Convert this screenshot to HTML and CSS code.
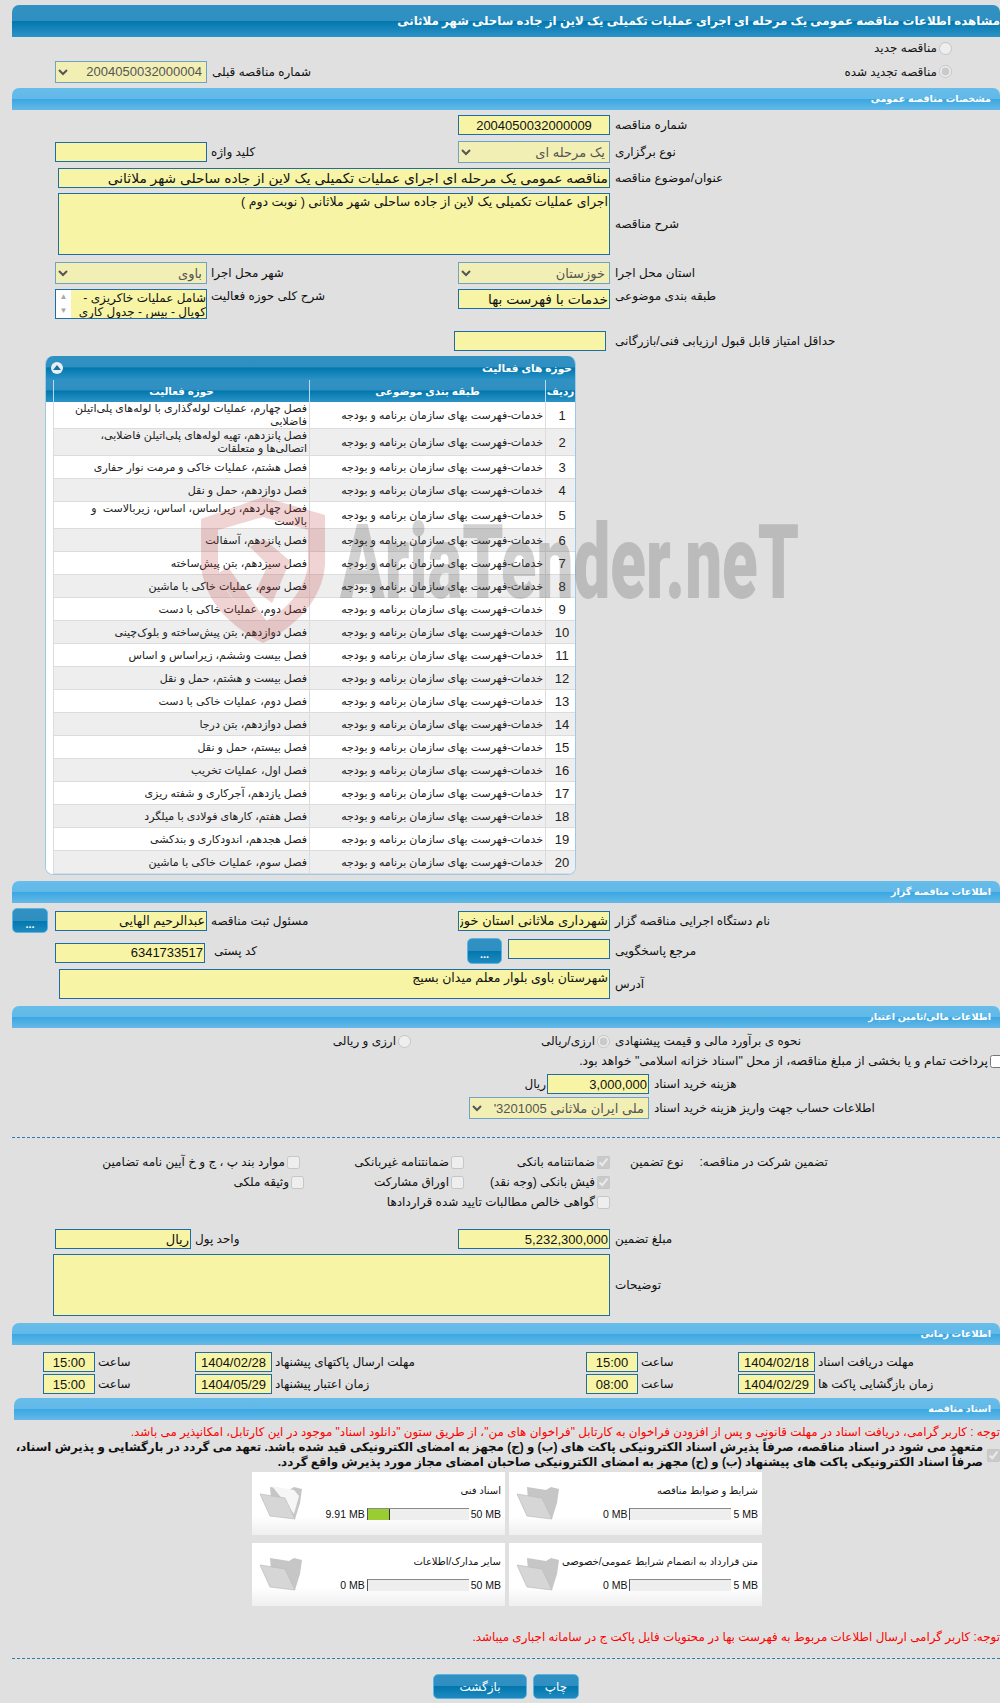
FILE: index.html
```html
<!DOCTYPE html>
<html lang="fa" dir="rtl">
<head>
  <meta charset="UTF-8">
  <meta name="viewport" content="width=device-width, initial-scale=1.0">
  <title>مشاهده اطلاعات مناقصه</title>
  <link rel="stylesheet" href="styles.css">
</head>
<body>

<div class="page">

  <div class="title-bar">مشاهده اطلاعات مناقصه عمومی یک مرحله ای اجرای عملیات تکمیلی یک لاین از جاده ساحلی شهر ملاثانی</div>

  <div class="radio-row first"><label class="opt"><input type="radio" disabled><span>مناقصه جدید</span></label></div>
  <div class="radio-row second">
    <label class="opt"><input type="radio" checked disabled><span>مناقصه تجدید شده</span></label>
    <div class="prev-no">
      <span class="lbl">شماره مناقصه قبلی</span>
      <select class="sel" disabled><option>2004050032000004</option></select>
    </div>
  </div>

  <div class="sec-bar">مشخصات مناقصه عمومی</div>

  <div class="row mt5">
    <span class="lbl">شماره مناقصه</span>
    <input class="fld center" readonly value="2004050032000009">
  </div>
  <div class="row mt6">
    <span class="lbl">نوع برگزاری</span>
    <select class="sel" disabled><option>یک مرحله ای</option></select>
    <span class="lbl lbl-l">کلید واژه</span>
    <input class="fld" readonly>
  </div>
  <div class="row mt5">
    <span class="lbl">عنوان/موضوع مناقصه</span>
    <input class="fld w552 fs14" readonly value="مناقصه عمومی یک مرحله ای اجرای عملیات تکمیلی یک لاین از جاده ساحلی شهر ملاثانی">
  </div>
  <div class="row mt5">
    <span class="lbl">شرح مناقصه</span>
    <textarea class="fld area w552 h62 fs12" readonly>اجرای عملیات تکمیلی یک لاین از جاده ساحلی شهر ملاثانی ( نوبت دوم )</textarea>
  </div>
  <div class="row mt7">
    <span class="lbl">استان محل اجرا</span>
    <select class="sel" disabled><option>خوزستان</option></select>
    <span class="lbl lbl-l">شهر محل اجرا</span>
    <select class="sel" disabled><option>باوی</option></select>
  </div>
  <div class="row mt5 top">
    <span class="lbl">طبقه بندی موضوعی</span>
    <input class="fld fs14" readonly value="خدمات با فهرست بها">
    <span class="lbl lbl-l">شرح کلی حوزه فعالیت</span>
    <div class="listbox">
      <div class="list-text">شامل عملیات خاکریزی - کوپال - بیس - جدول کاری</div>
      <div class="list-scroll"><span>▲</span><span>▼</span></div>
    </div>
  </div>
  <div class="row mt12 score-row">
    <span class="lbl">حداقل امتیاز قابل قبول ارزیابی فنی/بازرگانی</span>
    <input class="fld" readonly>
  </div>

  <div class="panel">
    <div class="panel-head">
      <span>حوزه های فعالیت</span>
      <span class="collapse"><svg width="8" height="6" viewBox="0 0 8 6"><path d="M0 5 4 0l4 5z" fill="#1d6f9e"/></svg></span>
    </div>
    <table class="grid">
      <thead>
        <tr><th class="c-no">ردیف</th><th class="c-cat">طبقه بندی موضوعی</th><th class="c-act">حوزه فعالیت</th><th class="c-pad"></th></tr>
      </thead>
      <tbody>
        <tr><td class="num">1</td><td>خدمات-فهرست بهای سازمان برنامه و بودجه</td><td>فصل چهارم، عملیات لوله‌گذاری با لوله‌های پلی‌اتیلن فاضلابی</td><td></td></tr>
        <tr><td class="num">2</td><td>خدمات-فهرست بهای سازمان برنامه و بودجه</td><td>فصل پانزدهم، تهیه لوله‌های پلی‌اتیلن فاضلابی، اتصالی‌ها و متعلقات</td><td></td></tr>
        <tr><td class="num">3</td><td>خدمات-فهرست بهای سازمان برنامه و بودجه</td><td>فصل هشتم، عملیات خاکی و مرمت نوار حفاری</td><td></td></tr>
        <tr><td class="num">4</td><td>خدمات-فهرست بهای سازمان برنامه و بودجه</td><td>فصل دوازدهم، حمل و نقل</td><td></td></tr>
        <tr><td class="num">5</td><td>خدمات-فهرست بهای سازمان برنامه و بودجه</td><td>فصل چهاردهم، زیراساس، اساس، زیربالاست &nbsp;و بالاست</td><td></td></tr>
        <tr><td class="num">6</td><td>خدمات-فهرست بهای سازمان برنامه و بودجه</td><td>فصل پانزدهم، آسفالت</td><td></td></tr>
        <tr><td class="num">7</td><td>خدمات-فهرست بهای سازمان برنامه و بودجه</td><td>فصل سیزدهم، بتن پیش‌ساخته</td><td></td></tr>
        <tr><td class="num">8</td><td>خدمات-فهرست بهای سازمان برنامه و بودجه</td><td>فصل سوم، عملیات خاکی با ماشین</td><td></td></tr>
        <tr><td class="num">9</td><td>خدمات-فهرست بهای سازمان برنامه و بودجه</td><td>فصل دوم، عملیات خاکی با دست</td><td></td></tr>
        <tr><td class="num">10</td><td>خدمات-فهرست بهای سازمان برنامه و بودجه</td><td>فصل دوازدهم، بتن پیش‌ساخته و بلوک‌چینی</td><td></td></tr>
        <tr><td class="num">11</td><td>خدمات-فهرست بهای سازمان برنامه و بودجه</td><td>فصل بیست وششم، زیراساس و اساس</td><td></td></tr>
        <tr><td class="num">12</td><td>خدمات-فهرست بهای سازمان برنامه و بودجه</td><td>فصل بیست و هشتم، حمل و نقل</td><td></td></tr>
        <tr><td class="num">13</td><td>خدمات-فهرست بهای سازمان برنامه و بودجه</td><td>فصل دوم، عملیات خاکی با دست</td><td></td></tr>
        <tr><td class="num">14</td><td>خدمات-فهرست بهای سازمان برنامه و بودجه</td><td>فصل دوازدهم، بتن درجا</td><td></td></tr>
        <tr><td class="num">15</td><td>خدمات-فهرست بهای سازمان برنامه و بودجه</td><td>فصل بیستم، حمل و نقل</td><td></td></tr>
        <tr><td class="num">16</td><td>خدمات-فهرست بهای سازمان برنامه و بودجه</td><td>فصل اول، عملیات تخریب</td><td></td></tr>
        <tr><td class="num">17</td><td>خدمات-فهرست بهای سازمان برنامه و بودجه</td><td>فصل یازدهم، آجرکاری و شفته ریزی</td><td></td></tr>
        <tr><td class="num">18</td><td>خدمات-فهرست بهای سازمان برنامه و بودجه</td><td>فصل هفتم، کارهای فولادی با میلگرد</td><td></td></tr>
        <tr><td class="num">19</td><td>خدمات-فهرست بهای سازمان برنامه و بودجه</td><td>فصل هجدهم، اندودکاری و بندکشی</td><td></td></tr>
        <tr><td class="num">20</td><td>خدمات-فهرست بهای سازمان برنامه و بودجه</td><td>فصل سوم، عملیات خاکی با ماشین</td><td></td></tr>
      </tbody>
    </table>
  </div>

  <div class="sec-bar mt6">اطلاعات مناقصه گزار</div>

  <div class="row owner-row mt5">
    <span class="lbl">نام دستگاه اجرایی مناقصه گزار</span>
    <input class="fld" readonly value="شهرداری ملاثانی استان خوزستان">
    <span class="lbl lbl-l">مسئول ثبت مناقصه</span>
    <input class="fld fs12" readonly value="عبدالرحیم الهایی">
    <span></span>
    <button class="btn dots">...</button>
  </div>
  <div class="row ref-row mt5">
    <span class="lbl">مرجع پاسخگویی</span>
    <div class="ref-ctrl">
      <input class="fld w102" readonly>
      <button class="btn dots">...</button>
    </div>
    <span class="lbl lbl-post">کد پستی</span>
    <input class="fld num-fld w150" readonly value="6341733517">
  </div>
  <div class="row mt5">
    <span class="lbl">آدرس</span>
    <textarea class="fld area w551 h30 fs12" readonly>شهرستان باوی بلوار معلم میدان بسیج</textarea>
  </div>

  <div class="sec-bar mt7">اطلاعات مالی/تامین اعتبار</div>

  <div class="row est-row mt4">
    <span class="lbl">نحوه ی برآورد مالی و قیمت پیشنهادی</span>
    <label class="opt"><input type="radio" checked disabled><span>ارزی/ریالی</span></label>
    <label class="opt"><input type="radio" disabled><span>ارزی و ریالی</span></label>
  </div>
  <label class="opt pay-note"><input type="checkbox"><span>پرداخت تمام و یا بخشی از مبلغ مناقصه، از محل "اسناد خزانه اسلامی" خواهد بود.</span></label>
  <div class="row doc-row mt5">
    <span class="lbl">هزینه خرید اسناد</span>
    <input class="fld num-fld w102" readonly value="3,000,000">
    <span class="unit">ریال</span>
  </div>
  <div class="row doc-row mt3">
    <span class="lbl">اطلاعات حساب جهت واریز هزینه خرید اسناد</span>
    <select class="sel w180"><option>ملی ایران ملاثانی 3201005'</option></select>
  </div>

  <div class="dash"></div>

  <div class="guar">
    <div class="guar-label"><span>تضمین شرکت در مناقصه:</span><span>نوع تضمین</span></div>
    <label class="opt"><input type="checkbox" checked disabled><span>ضمانتنامه بانکی</span></label>
    <label class="opt"><input type="checkbox" disabled><span>ضمانتنامه غیربانکی</span></label>
    <label class="opt nudge"><input type="checkbox" disabled><span>موارد بند پ ، ج و خ آیین نامه تضامین</span></label>
    <label class="opt second-row"><input type="checkbox" checked disabled><span>فیش بانکی (وجه نقد)</span></label>
    <label class="opt"><input type="checkbox" disabled><span>اوراق مشارکت</span></label>
    <label class="opt"><input type="checkbox" disabled><span>وثیقه ملکی</span></label>
    <label class="opt span3"><input type="checkbox" disabled><span>گواهی خالص مطالبات تایید شده قراردادها</span></label>
  </div>

  <div class="row amount-row">
    <span class="lbl">مبلغ تضمین</span>
    <input class="fld num-fld" readonly value="5,232,300,000">
    <span class="lbl lbl-l">واحد پول</span>
    <input class="fld w136" readonly value="ریال">
  </div>
  <div class="row mt5">
    <span class="lbl">توضیحات</span>
    <textarea class="fld area w557 h62" readonly></textarea>
  </div>

  <div class="sec-bar mt7">اطلاعات زمانی</div>

  <div class="time-row mt7">
    <span class="lbl">مهلت دریافت اسناد</span>
    <input class="fld center" readonly value="1404/02/18">
    <span class="lbl">ساعت</span>
    <input class="fld center" readonly value="15:00">
    <span class="lbl">مهلت ارسال پاکتهای پیشنهاد</span>
    <input class="fld center" readonly value="1404/02/28">
    <span class="lbl">ساعت</span>
    <input class="fld center" readonly value="15:00">
  </div>
  <div class="time-row mt2">
    <span class="lbl">زمان بازگشایی پاکت ها</span>
    <input class="fld center" readonly value="1404/02/29">
    <span class="lbl">ساعت</span>
    <input class="fld center" readonly value="08:00">
    <span class="lbl">زمان اعتبار پیشنهاد</span>
    <input class="fld center" readonly value="1404/05/29">
    <span class="lbl">ساعت</span>
    <input class="fld center" readonly value="15:00">
  </div>

  <div class="sec-bar docs-bar">اسناد مناقصه</div>

  <p class="note-red first-note">توجه : کاربر گرامی، دریافت اسناد در مهلت قانونی و پس از افزودن فراخوان به کارتابل "فراخوان های من"، از طریق ستون "دانلود اسناد" موجود در این کارتابل، امکانپذیر می باشد.</p>
  <div class="pledge">
    <input type="checkbox" checked disabled>
    <p>متعهد می شود در اسناد مناقصه، صرفاً پذیرش اسناد الکترونیکی پاکت های (ب) و (ج) مجهز به امضای الکترونیکی قید شده باشد. تعهد می گردد در بارگشایی و پذیرش اسناد،<br>صرفاً اسناد الکترونیکی پاکت های پیشنهاد (ب) و (ج) مجهز به امضای الکترونیکی صاحبان امضای مجاز مورد پذیرش واقع گردد.</p>
  </div>

  <div class="cards">
    <div class="card">
      <div class="card-body">
        <div class="card-title">شرایط و ضوابط مناقصه</div>
        <div class="prog"><span>5 MB</span><div class="bar"><div class="fill" style="width:0"></div></div><span>0 MB</span></div>
      </div>
      <svg class="folder" width="44" height="36" viewBox="0 0 44 36"><path d="M10 1 29 4l5-3 8 2-2 14-5 16-23-6z" fill="#c6c6c6"/><path d="M0 8l25 4 10 21-25-3z" fill="#d6d6d6" stroke="#bbb" stroke-width=".7"/></svg>
    </div>
    <div class="card">
      <div class="card-body">
        <div class="card-title">اسناد فنی</div>
        <div class="prog"><span>50 MB</span><div class="bar"><div class="fill on" style="width:22%"></div></div><span>9.91 MB</span></div>
      </div>
      <svg class="folder" width="44" height="36" viewBox="0 0 44 36"><path d="M10 1 29 4l5-3 8 2-2 14-5 16-23-6z" fill="#c6c6c6"/><path d="M12 0l22 4 5 6-5 18z" fill="#f6f6f6"/><path d="M0 8l25 4 10 21-25-3z" fill="#d6d6d6" stroke="#bbb" stroke-width=".7"/></svg>
    </div>
    <div class="card">
      <div class="card-body">
        <div class="card-title">متن قرارداد به انضمام شرایط عمومی/خصوصی</div>
        <div class="prog"><span>5 MB</span><div class="bar"><div class="fill" style="width:0"></div></div><span>0 MB</span></div>
      </div>
      <svg class="folder" width="44" height="36" viewBox="0 0 44 36"><path d="M10 1 29 4l5-3 8 2-2 14-5 16-23-6z" fill="#c6c6c6"/><path d="M0 8l25 4 10 21-25-3z" fill="#d6d6d6" stroke="#bbb" stroke-width=".7"/></svg>
    </div>
    <div class="card">
      <div class="card-body">
        <div class="card-title">سایر مدارک/اطلاعات</div>
        <div class="prog"><span>50 MB</span><div class="bar"><div class="fill" style="width:0"></div></div><span>0 MB</span></div>
      </div>
      <svg class="folder" width="44" height="36" viewBox="0 0 44 36"><path d="M10 1 29 4l5-3 8 2-2 14-5 16-23-6z" fill="#c6c6c6"/><path d="M0 8l25 4 10 21-25-3z" fill="#d6d6d6" stroke="#bbb" stroke-width=".7"/></svg>
    </div>
  </div>

  <p class="note-red last-note">توجه: کاربر گرامی ارسال اطلاعات مربوط به فهرست بها در محتویات فایل پاکت ج در سامانه اجباری میباشد.</p>

  <div class="dash dash-end"></div>

  <div class="actions">
    <button class="btn act-print">چاپ</button>
    <button class="btn act-back">بازگشت</button>
  </div>

</div>

<!-- watermark over the page -->
<svg class="wm-shield" width="130" height="150" viewBox="0 0 130 150">
  <path fill-rule="evenodd" fill="#c03a3a" d="M65 0 127 18v50c-3 36-30 62-62 78C33 130 6 104 3 68V22zM65 20 20 33v35c3 26 22 45 45 58 23-13 42-32 45-58V33z"/>
  <path fill="#c03a3a" d="M52 50 66 42 92 64 74 106 58 94 70 68zM18 78l12-8 40 56-10 10z"/>
</svg>
<div class="wm-text">AriaTender.neT</div>

</body>
</html>
```

FILE: styles.css
```css
html, body {
  margin: 0;
  padding: 0;
  overflow-x: hidden;
}

body {
  position: relative;
  background-color: #e0e0e0;
  font-family: "Liberation Sans", "DejaVu Sans", sans-serif;
  font-size: 12px;
  color: #111;
}

.page {
  width: 988px;
  margin-left: 12px;
  padding: 5px 0 6px;
}

p {
  margin: 0;
}

.title-bar {
  height: 32px;
  line-height: 32px;
  border-radius: 7px 7px 0 0;
  background: linear-gradient(#3191c2 0, #2e8fc0 50%, #0177ae 50%, #2d93c7 100%);
  color: #fff;
  font-weight: bold;
  font-size: 11.8px;
  white-space: nowrap;
  overflow: hidden;
}

.sec-bar {
  height: 22px;
  line-height: 22px;
  padding-right: 9px;
  border-radius: 7px 7px 0 0;
  background: linear-gradient(#66bdea 0, #62b9e8 50%, #38a7e2 50%, #66b9e7 100%);
  color: #fff;
  font-weight: bold;
  font-size: 9.6px;
}

.mt2 { margin-top: 2px; }
.mt3 { margin-top: 3px; }
.mt4 { margin-top: 4px; }
.mt5 { margin-top: 5px; }
.mt6 { margin-top: 6px; }
.mt7 { margin-top: 7px; }
.mt12 { margin-top: 12px; }

/* form rows: label, control, label, control from the right */
.row {
  display: grid;
  grid-template-columns: 390px 152px 251px 152px;
  align-items: center;
}

.row.top {
  align-items: start;
}

.lbl {
  display: block;
  text-align: left;
  padding-left: 5px;
  white-space: nowrap;
}

.lbl-l {
  padding-left: 4px;
}

.fld {
  box-sizing: border-box;
  display: block;
  width: 152px;
  height: 20px;
  margin: 0;
  padding: 0 1px;
  border: 1px solid #1c6ea4;
  border-radius: 0;
  background-color: #f7f5a5;
  font-family: inherit;
  font-size: 13px;
  color: #111;
  outline: none;
}

.fs12 { font-size: 12.5px; }
.fs14 { font-size: 13.8px; }
.center { text-align: center; }
.num-fld { text-align: right; }

.area {
  resize: none;
  overflow: hidden;
  text-align: right;
}

.w102 { width: 102px; }
.w136 { width: 136px; }
.w150 { width: 150px; }
.w551 { width: 551px; }
.w552 { width: 552px; }
.w557 { width: 557px; }
.h30 { height: 30px; }
.h62 { height: 62px; }

.sel {
  box-sizing: border-box;
  display: block;
  width: 152px;
  height: 22px;
  margin: 0;
  border: 1px solid #6fa3c4;
  border-radius: 0;
  background-color: #f2efb4;
  font-family: inherit;
  font-size: 13px;
  color: #555;
  opacity: 1;
}

.w180 { width: 180px; }

.opt {
  display: flex;
  align-items: center;
  gap: 2px;
  white-space: nowrap;
}

.opt input {
  margin: 0;
  width: 13px;
  height: 13px;
  flex: none;
}

.radio-row {
  padding-right: 48px;
}

.radio-row.first {
  height: 16px;
  margin-top: 4px;
}

.radio-row.second {
  display: flex;
  justify-content: space-between;
  align-items: center;
  height: 21px;
  margin: 4px 0 6px;
}

.prev-no {
  display: flex;
  align-items: center;
  margin-left: 43px;
}

.listbox {
  box-sizing: border-box;
  display: flex;
  width: 152px;
  height: 30px;
  border: 1px solid #1c6ea4;
  background-color: #f7f5a5;
}

.list-text {
  flex: 1;
  padding-top: 1px;
  line-height: 14px;
  overflow: hidden;
}

.list-scroll {
  flex: none;
  display: flex;
  flex-direction: column;
  justify-content: space-between;
  align-items: center;
  width: 15px;
  padding: 2px 0;
  background-color: #fff;
  color: #a8a8a8;
  font-size: 8px;
  line-height: 10px;
}

.score-row input {
  margin-right: 4px;
}

/* activity table */
.panel {
  box-sizing: border-box;
  width: 531px;
  margin: 5px 424px 0 0;
  border: 1px solid #9cc9e8;
  border-top: none;
  border-radius: 8px;
  background-color: #fff;
  overflow: hidden;
}

.panel-head {
  display: flex;
  justify-content: space-between;
  align-items: center;
  height: 24px;
  padding: 0 3px 0 5px;
  background: linear-gradient(#3191c2 0, #2e8fc0 45%, #0177ae 50%, #2d93c7 100%);
  color: #fff;
  font-weight: bold;
  font-size: 10.6px;
}

.collapse {
  display: flex;
  justify-content: center;
  align-items: center;
  width: 12px;
  height: 12px;
  border-radius: 50%;
  background-color: #e6f0f6;
}

.grid {
  width: 100%;
  border-collapse: collapse;
  table-layout: fixed;
}

.grid th {
  height: 22px;
  padding: 0;
  border-left: 1px solid #b7dcf2;
  background: linear-gradient(#3191c2 0, #2e8fc0 45%, #0177ae 50%, #2d93c7 100%);
  color: #fff;
  font-size: 10.4px;
}

.c-no { width: 29px; }
.c-cat { width: 235px; }
.c-act { width: 255px; }
.c-pad { width: 10px; }

.grid td {
  height: 22px;
  padding: 0 2px 0 5px;
  border-left: 1px solid #dcdcdc;
  border-bottom: 1px solid #dcdcdc;
  font-size: 11px;
  line-height: 13px;
  text-align: right;
  color: #222;
}

.grid tr:nth-child(even) td {
  background-color: #eeeeee;
}

.grid td.num {
  text-align: center;
  font-size: 13px;
}

.grid td:last-child {
  background-color: #fff !important;
  border: none;
}

/* owner section */
.owner-row {
  grid-template-columns: 390px 152px 251px 152px 7px 36px;
}

.btn {
  border: 1px solid #5ab5e2;
  border-radius: 5px;
  background: linear-gradient(#3191c2 0, #2e8fc0 50%, #0177ae 50%, #1f8abf 100%);
  color: #fff;
  font-family: inherit;
  padding: 0;
}

.dots {
  display: block;
  width: 36px;
  height: 25px;
  padding-top: 6px;
  font-size: 11px;
  font-weight: bold;
}

.ref-row {
  grid-template-columns: 390px 143px 262px 150px;
}

.ref-ctrl {
  display: flex;
  gap: 6px;
}

.ref-ctrl .dots {
  height: 26px;
}

.ref-ctrl .fld {
  margin-top: 1px;
}

.lbl-post {
  padding-left: 9px;
}

.w150 {
  margin-top: 3px;
}

/* money section */
.est-row {
  grid-template-columns: 390px 199px auto;
  height: 18px;
}

.pay-note {
  height: 16px;
  margin: 3px -3px 0 0;
  font-size: 12.3px;
}

.doc-row {
  grid-template-columns: 351px auto auto;
  justify-content: start;
}

.unit {
  padding-right: 1px;
}

.dash {
  margin-top: 18px;
  border-top: 1px dashed #2a80b0;
}

.guar {
  display: grid;
  grid-template-columns: 390px 146px 160px 1fr;
  grid-auto-rows: 20px;
  align-items: center;
  margin-top: 14px;
}

.guar-label {
  display: flex;
  justify-content: flex-end;
  gap: 16px;
  padding-left: 20px;
}

.guar > .nudge { margin-right: 4px; }
.guar > .second-row { grid-column: 2; }
.guar > .span3 { grid-column: 2 / 5; }

.amount-row {
  grid-template-columns: 390px 152px 267px 136px;
  margin-top: 17px;
}

.time-row {
  display: grid;
  grid-template-columns: 185px 77px 100px 52px 314px 77px 100px 52px;
  align-items: center;
}

.time-row .fld {
  width: 100%;
}

.time-row .lbl {
  padding-left: 3px;
}

.docs-bar {
  margin: 4px 0 0 2px;
}

.note-red {
  color: #f00;
  font-size: 11.9px;
  line-height: 14px;
  white-space: nowrap;
}

.first-note {
  margin-top: 5px;
}

.pledge {
  display: flex;
  gap: 4px;
  margin-top: 1px;
}

.pledge input {
  margin: 1px 0 0;
  flex: none;
}

.pledge p {
  font-weight: bold;
  font-size: 11.85px;
  line-height: 15px;
  white-space: nowrap;
}

.cards {
  display: grid;
  grid-template-columns: 253px 253px;
  grid-auto-rows: 63px;
  column-gap: 4px;
  row-gap: 8px;
  margin: 2px 238px 0 0;
}

.card {
  display: flex;
  justify-content: space-between;
  background: linear-gradient(#fff 0, #fff 70%, #efefef 100%);
}

.card-body {
  flex: 1;
  padding: 12px 4px 0 0;
}

.card-title {
  font-size: 10px;
  height: 24px;
  line-height: 14px;
  white-space: nowrap;
}

.prog {
  display: flex;
  align-items: center;
  gap: 2px;
  font-size: 10.5px;
  white-space: nowrap;
}

.prog span {
  direction: ltr;
  unicode-bidi: embed;
}

.bar {
  box-sizing: border-box;
  direction: ltr;
  width: 102px;
  height: 12px;
  border-top: 1px solid #8a8a8a;
  border-left: 1px solid #555;
  background-color: #eee;
}

.fill {
  box-sizing: border-box;
  height: 11px;
  background-color: #9acd32;
}

.fill.on {
  border-right: 1px solid #333;
}

.folder {
  margin: 14px 0 0 8px;
  flex: none;
}

.last-note {
  margin-top: 24px;
}

.dash-end {
  margin-top: 14px;
}

.actions {
  display: flex;
  justify-content: center;
  gap: 6px;
  margin-top: 15px;
}

.act-print {
  width: 46px;
  height: 25px;
  font-size: 12px;
}

.act-back {
  width: 94px;
  height: 25px;
  font-size: 12px;
}

/* watermark */
.wm-shield {
  position: absolute;
  left: 198px;
  top: 497px;
  opacity: 0.22;
  pointer-events: none;
}

.wm-text {
  position: absolute;
  left: 340px;
  top: 508px;
  direction: ltr;
  font-family: Roboto, "Liberation Sans", sans-serif;
  font-weight: 900;
  font-size: 104px;
  line-height: 110px;
  color: #505050;
  opacity: 0.25;
  white-space: nowrap;
  transform: scaleX(0.63);
  transform-origin: left top;
  pointer-events: none;
}
```
